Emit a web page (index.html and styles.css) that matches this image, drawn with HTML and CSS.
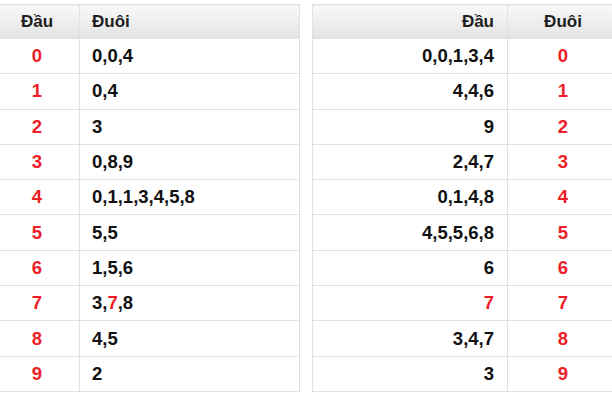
FILE: index.html
```html
<!DOCTYPE html>
<html lang="vi">
<head>
<meta charset="utf-8">
<link rel="stylesheet" href="styles.css">
</head>
<body>
<div class="wrap">
  <table class="tbl tbl-left">
    <thead>
      <tr><th class="c-dau">Đầu</th><th class="c-duoi">Đuôi</th></tr>
    </thead>
    <tbody>
      <tr><td class="c-dau red">0</td><td class="c-duoi">0,0,4</td></tr>
      <tr><td class="c-dau red">1</td><td class="c-duoi">0,4</td></tr>
      <tr><td class="c-dau red">2</td><td class="c-duoi">3</td></tr>
      <tr><td class="c-dau red">3</td><td class="c-duoi">0,8,9</td></tr>
      <tr><td class="c-dau red">4</td><td class="c-duoi">0,1,1,3,4,5,8</td></tr>
      <tr><td class="c-dau red">5</td><td class="c-duoi">5,5</td></tr>
      <tr><td class="c-dau red">6</td><td class="c-duoi">1,5,6</td></tr>
      <tr><td class="c-dau red">7</td><td class="c-duoi">3,<span class="red">7</span>,8</td></tr>
      <tr><td class="c-dau red">8</td><td class="c-duoi">4,5</td></tr>
      <tr><td class="c-dau red">9</td><td class="c-duoi">2</td></tr>
    </tbody>
  </table>
  <table class="tbl tbl-right">
    <thead>
      <tr><th class="c-dau">Đầu</th><th class="c-duoi">Đuôi</th></tr>
    </thead>
    <tbody>
      <tr><td class="c-dau">0,0,1,3,4</td><td class="c-duoi red">0</td></tr>
      <tr><td class="c-dau">4,4,6</td><td class="c-duoi red">1</td></tr>
      <tr><td class="c-dau">9</td><td class="c-duoi red">2</td></tr>
      <tr><td class="c-dau">2,4,7</td><td class="c-duoi red">3</td></tr>
      <tr><td class="c-dau">0,1,4,8</td><td class="c-duoi red">4</td></tr>
      <tr><td class="c-dau">4,5,5,6,8</td><td class="c-duoi red">5</td></tr>
      <tr><td class="c-dau">6</td><td class="c-duoi red">6</td></tr>
      <tr><td class="c-dau red">7</td><td class="c-duoi red">7</td></tr>
      <tr><td class="c-dau">3,4,7</td><td class="c-duoi red">8</td></tr>
      <tr><td class="c-dau">3</td><td class="c-duoi red">9</td></tr>
    </tbody>
  </table>
</div>
</body>
</html>
```
FILE: styles.css
```css
html, body {
  margin: 0;
  padding: 0;
  background: #ffffff;
  overflow: hidden;
}
body {
  font-family: "Liberation Sans", Arial, sans-serif;
  color: #111;
}
.wrap {
  display: flex;
  gap: 12px;
  padding-top: 4px;
  margin-left: -6px;
  width: 640px;
}
.tbl {
  border-collapse: collapse;
  width: 306px;
  flex: none;
  table-layout: fixed;
}
.tbl th,
.tbl td {
  border: 1px solid #e6e2da;
  padding: 0;
  font-weight: bold;
}
.tbl th {
  height: 33px;
  font-size: 17px;
  color: #1e1e1e;
  background: linear-gradient(to bottom, #f8f8f8 0%, #ececec 60%, #e3e3e3 100%);
}
.tbl td {
  height: 34.3px;
  font-size: 18.5px;
  color: #111;
}
.red {
  color: #ee1d27 !important;
}
.tbl-left .c-dau {
  width: 84px;
  text-align: center;
}
.tbl-left .c-duoi {
  text-align: left;
  padding-left: 12px;
}
.tbl-right {
  width: 307px;
}
.tbl-right .c-dau {
  width: 195px;
  text-align: right;
  padding-right: 13px;
  box-sizing: border-box;
}
.tbl-right .c-duoi {
  text-align: center;
}
```
